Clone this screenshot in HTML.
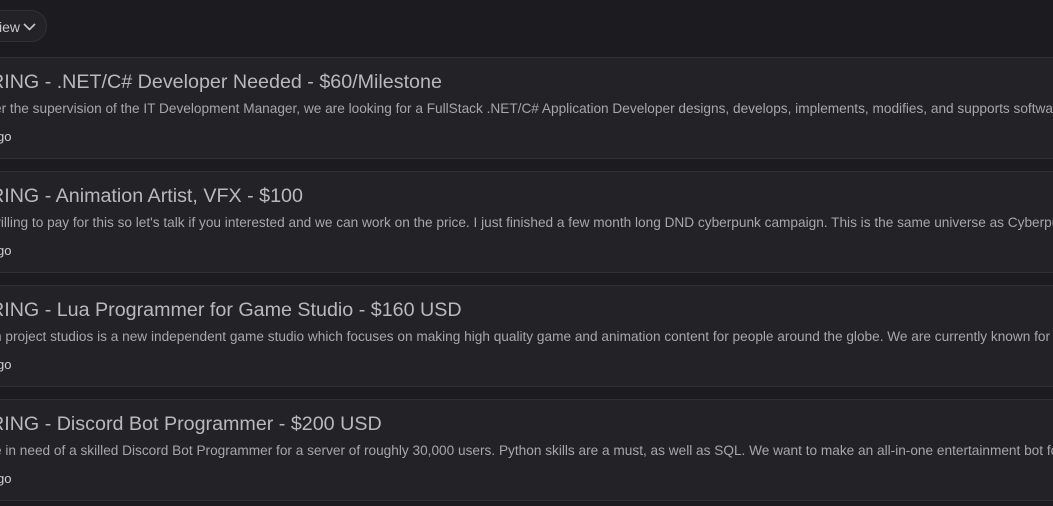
<!DOCTYPE html><html><head><style>
body{margin:0;width:1053px;height:506px;overflow:hidden;background:#1c1c20;font-family:"Liberation Sans",sans-serif;position:relative}
.btn{position:absolute;left:-40px;top:10px;width:87px;height:32px;border:1px solid #303036;border-radius:16px;background:#222227;color:#c8c8cc;font-size:14px;box-sizing:border-box}
.btn span{position:absolute;left:38px;top:8px}
.btn svg{position:absolute;left:62px;top:12px}
.card{position:absolute;left:-10px;width:1080px;height:100px;background:#222227;border-top:1px solid #2f2f34;border-bottom:1px solid #2f2f34;white-space:nowrap}
.t{position:absolute;left:0;top:13px;font-size:19.7px;color:#b8b8be}
.d{position:absolute;left:4px;top:43px;font-size:13.65px;color:#a6a6ac}
.a{position:absolute;left:7px;top:71px;font-size:13px;color:#d0d0d4}
</style></head><body>
<div class="btn"><span>iew</span><svg width="13" height="8" viewBox="0 0 13 8"><path d="M1 1l5.5 5.5L12 1" stroke="#c8c8cc" stroke-width="1.6" fill="none"/></svg></div>
<div class="card" style="top:57px"><div class="t">RING - .NET/C# Developer Needed - $60/Milestone</div><div class="d">er the supervision of the IT Development Manager, we are looking for a FullStack .NET/C# Application Developer designs, develops, implements, modifies, and supports software</div><div class="a">go</div></div>
<div class="card" style="top:171px"><div class="t">RING - Animation Artist, VFX - $100</div><div class="d">villing to pay for this so let's talk if you interested and we can work on the price. I just finished a few month long DND cyberpunk campaign. This is the same universe as Cyberpunk</div><div class="a">go</div></div>
<div class="card" style="top:285px"><div class="t">RING - Lua Programmer for Game Studio - $160 USD</div><div class="d">n project studios is a new independent game studio which focuses on making high quality game and animation content for people around the globe. We are currently known for our</div><div class="a">go</div></div>
<div class="card" style="top:399px"><div class="t">RING - Discord Bot Programmer - $200 USD</div><div class="d">e in need of a skilled Discord Bot Programmer for a server of roughly 30,000 users. Python skills are a must, as well as SQL. We want to make an all-in-one entertainment bot for</div><div class="a">go</div></div>
</body></html>
